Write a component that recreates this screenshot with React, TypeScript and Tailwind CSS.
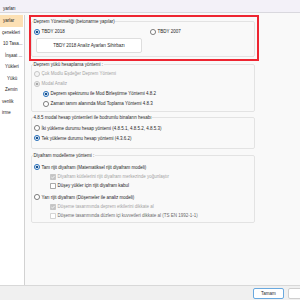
import React from "react";

type RS = "on" | "off" | "dis" | "disOn";

function Radio({ s }: { s: RS }) {
  const ring = s === "on" ? "#1463b4" : s === "off" ? "#707070" : "#c2c2c2";
  const fill = s === "dis" || s === "disOn" ? "#f4f4f4" : "#ffffff";
  return (
    <svg width="6" height="6" viewBox="0 0 6 6" className="shrink-0">
      <circle cx="3" cy="3" r="2.55" fill={fill} stroke={ring} strokeWidth="0.9" />
      {s === "on" && <circle cx="3" cy="3" r="1.35" fill="#17508f" />}
      {s === "disOn" && <circle cx="3" cy="3" r="1.35" fill="#a8a8a8" />}
    </svg>
  );
}

function Check({ checked, disabled }: { checked: boolean; disabled: boolean }) {
  return (
    <svg width="6" height="6" viewBox="0 0 6 6" className="shrink-0">
      {checked ? (
        <>
          <rect x="0.3" y="0.3" width="5.4" height="5.4" rx="0.6" fill="#c4c4c4" stroke="#b8b8b8" strokeWidth="0.5" />
          <path d="M1.4 3.1 L2.5 4.1 L4.6 1.9" fill="none" stroke="#ffffff" strokeWidth="0.8" />
        </>
      ) : (
        <rect x="0.4" y="0.4" width="5.2" height="5.2" rx="0.6" fill="#ffffff" stroke={disabled ? "#bdbdbd" : "#7a7a7a"} strokeWidth="0.7" />
      )}
    </svg>
  );
}

function RadioRow({ s, text, indent = false, mt = "" }: { s: RS; text: string; indent?: boolean; mt?: string }) {
  const dis = s === "dis" || s === "disOn";
  return (
    <div className={`flex items-center h-[10px] gap-[1.5px] ${indent ? "pl-[11px]" : "pl-[2px]"} ${mt}`}>
      <Radio s={s} />
      <span className={`whitespace-nowrap ${dis ? "text-[#a3a3a3]" : "text-[#1f1f1f]"}`}>{text}</span>
    </div>
  );
}

function CheckRow({ checked, disabled, text, color }: { checked: boolean; disabled: boolean; text: string; color?: string }) {
  return (
    <div className="flex items-center h-[9px] gap-[1.5px] pl-[18px]">
      <Check checked={checked} disabled={disabled} />
      <span className={`whitespace-nowrap ${color ?? (disabled ? "text-[#a3a3a3]" : "text-[#1f1f1f]")}`}>{text}</span>
    </div>
  );
}

const sideItems: [string, string][] = [
  ["yarlar", "pl-[3px]"],
  ["çenekleri", "pl-[2px]"],
  ["10 Tasa...", "pl-[3px]"],
  ["İnşaat ...", "pl-[5px]"],
  ["Yükleri", "pl-[5px]"],
  ["Yükü", "pl-[7px]"],
  ["Zemin", "pl-[5px]"],
  ["venlik", "pl-[2px]"],
  ["irme", "pl-[2px]"],
];

export default function App() {
  return (
    <div className="relative w-[300px] h-[300px] overflow-hidden bg-[#f9f9f9] flex flex-col font-['Liberation_Sans',Arial,sans-serif] text-[4.5px] leading-[5px] text-[#1f1f1f]">
      {/* title bar */}
      <div className="h-[13px] shrink-0 bg-[#f3f1f8] border-b border-[#d9d8de] pt-[5.5px] pl-[3px]">
        <span className="whitespace-nowrap text-[#222]">yarları</span>
      </div>

      {/* middle */}
      <div className="flex-1 flex flex-row min-h-0">
        {/* sidebar */}
        <div className="w-[25px] shrink-0 mt-[2px] bg-white border-r border-[#d2d2d2] flex flex-col overflow-hidden">
          {sideItems.map(([t, pl], i) => (
            <div
              key={i}
              className={`h-[11.5px] shrink-0 flex items-center whitespace-nowrap overflow-hidden ${pl} ${i === 0 ? "bg-[#fce0b4] mr-[1px]" : ""}`}
            >
              {t}
            </div>
          ))}
        </div>

        {/* main */}
        <div className="flex flex-col pl-[6px] pt-[5.5px]">
          {/* group 1 */}
          <fieldset className="w-[224px] border border-[#e3e3e3] rounded-[2px] pb-[2.5px]">
            <legend className="ml-[1px] px-[0.5px] leading-[5px] text-[#2a2a2a]">Deprem Yönetmeliği (betonarme yapılar)</legend>
            <div className="flex items-center h-[10px] mt-[3px] pl-[2px]">
              <div className="w-[116px] flex items-center gap-[1.5px]">
                <Radio s="on" />
                <span>TBDY 2018</span>
              </div>
              <div className="flex items-center gap-[1.5px]">
                <Radio s="off" />
                <span>TBDY 2007</span>
              </div>
            </div>
            <div className="mt-[1.5px] ml-[4px] w-[106px] h-[15px] bg-white border border-[#dedede] rounded-[2px] flex items-center justify-center whitespace-nowrap">
              TBDY 2018 Analiz Ayarları Sihirbazı
            </div>
          </fieldset>

          {/* group 2 */}
          <fieldset className="w-[224px] mt-[5px] border border-[#e3e3e3] rounded-[2px] pb-[2px]">
            <legend className="ml-[1px] px-[0.5px] leading-[5px] text-[#2a2a2a]">Deprem yükü hesaplama yöntemi :</legend>
            <RadioRow s="dis" text="Çok Modlu Eşdeğer Deprem Yöntemi" mt="mt-[2px]" />
            <RadioRow s="disOn" text="Modal Analiz" />
            <RadioRow s="on" indent text="Deprem spektrumu ile Mod Birleştirme Yöntemi 4.8.2" />
            <RadioRow s="off" indent text="Zaman tanım alanında Mod Toplama Yöntemi 4.8.3" />
          </fieldset>

          {/* group 3 */}
          <fieldset className="w-[224px] mt-[3px] border border-[#e3e3e3] rounded-[2px] pb-[4.5px]">
            <legend className="ml-[1px] px-[0.5px] leading-[5px] text-[#2a2a2a]">4.8.5 modal hesap yöntemleri ile bodrumlu binaların hesabı</legend>
            <RadioRow s="off" text="İki yükleme durumu hesap yöntemi (4.8.5.1, 4.8.5.2, 4.8.5.3)" mt="mt-[3.5px]" />
            <RadioRow s="on" text="Tek yükleme durumu hesap yöntemi (4.3.6.2)" />
          </fieldset>

          {/* group 4 */}
          <fieldset className="w-[224px] mt-[4px] border border-[#e3e3e3] rounded-[2px] pb-[1.5px]">
            <legend className="ml-[1px] px-[0.5px] leading-[5px] text-[#2a2a2a]">Diyafram modelleme yöntemi :</legend>
            <RadioRow s="on" text="Tam rijit diyafram (Matematiksel rijit diyafram modeli)" mt="mt-[4.5px]" />
            <CheckRow checked disabled text="Diyafram kütlelerini rijit diyafram merkezinde yoğunlaştır" />
            <CheckRow checked={false} disabled={false} text="Düşey yükler için rijit diyafram kabul" />
            <RadioRow s="off" text="Yarı rijit diyafram (Döşemeler ile analiz modeli)" mt="mt-[2px]" />
            <CheckRow checked disabled text="Döşeme tasarımında deprem etkilerini dikkate al" />
            <CheckRow checked={false} disabled text="Döşeme tasarımında düzlem içi kuvvetleri dikkate al (TS EN 1992-1-1)" color="text-[#6a6a6a]" />
          </fieldset>
        </div>
      </div>

      {/* bottom bar */}
      <div className="h-[15px] shrink-0 bg-[#f0f0f0] border-t border-[#d8d8d8] flex flex-row justify-end items-start pt-[1.5px] gap-[4px]">
        <div className="w-[31px] h-[11px] bg-white border border-[#6aa9df] rounded-[2px] flex items-center justify-center">Tamam</div>
        <div className="w-[31px] h-[11px] mr-[-19px] bg-white border border-[#cfcfcf] rounded-[2px]" />
      </div>

      {/* red annotation */}
      <div className="absolute left-[29px] top-[15px] w-[230px] h-[46px] border-2 border-[#ee2531]" />
    </div>
  );
}
